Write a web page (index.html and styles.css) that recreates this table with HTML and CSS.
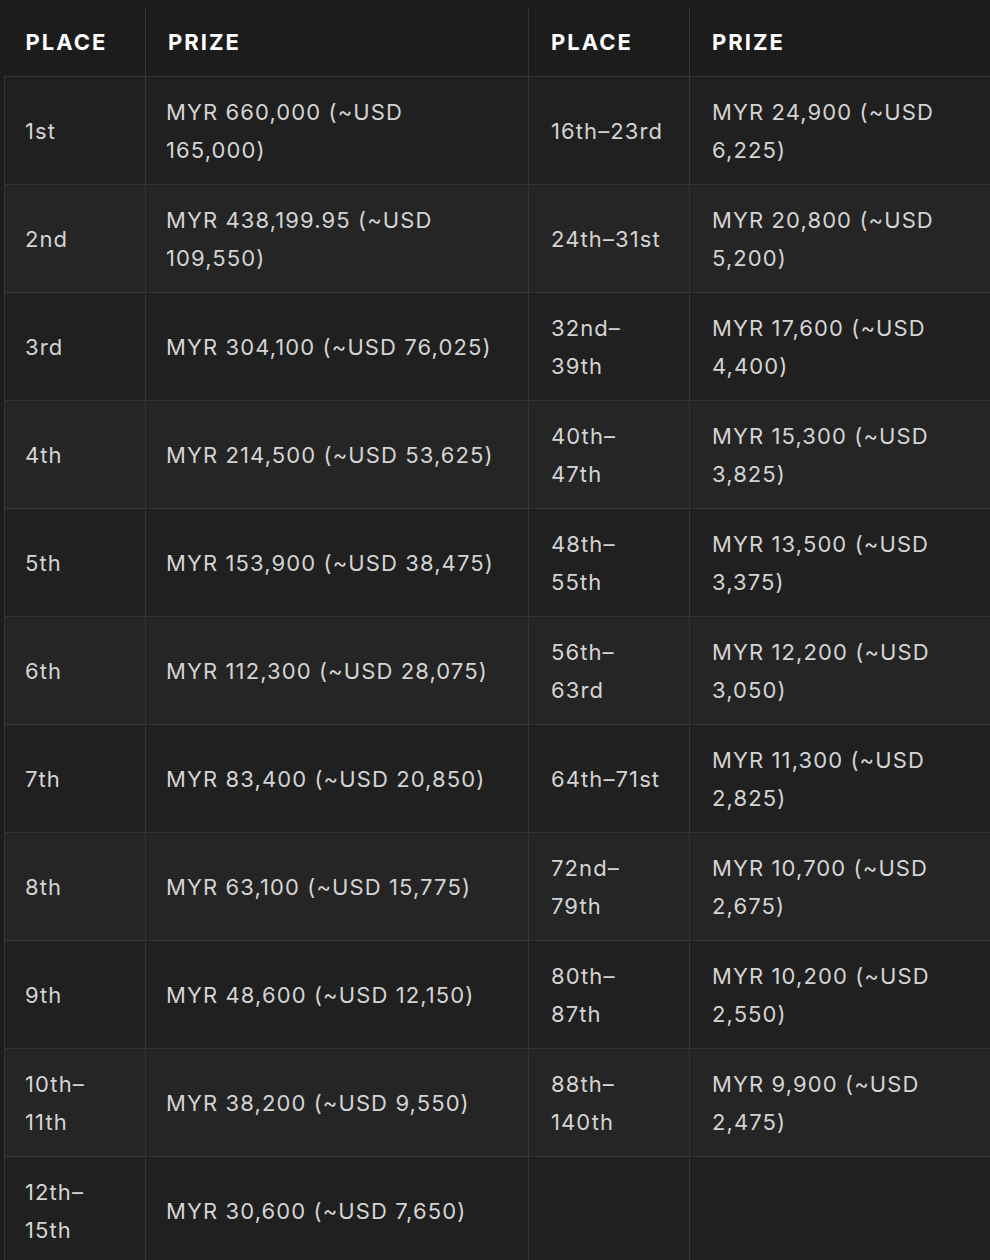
FILE: index.html
```html
<!DOCTYPE html>
<html>
<head>
<meta charset="utf-8">
<link rel="stylesheet" href="styles.css">
</head>
<body>
<table class="prizes">
<colgroup>
<col class="c-place"><col class="c-prize"><col class="c-place2"><col class="c-prize2">
</colgroup>
<thead>
<tr><th>Place</th><th>Prize</th><th>Place</th><th>Prize</th></tr>
</thead>
<tbody>
<tr><td>1st</td><td>MYR 660,000 (~USD 165,000)</td><td>16th–23rd</td><td>MYR 24,900 (~USD 6,225)</td></tr>
<tr><td>2nd</td><td>MYR 438,199.95 (~USD 109,550)</td><td>24th–31st</td><td>MYR 20,800 (~USD 5,200)</td></tr>
<tr><td>3rd</td><td>MYR 304,100 (~USD 76,025)</td><td>32nd–39th</td><td>MYR 17,600 (~USD 4,400)</td></tr>
<tr><td>4th</td><td>MYR 214,500 (~USD 53,625)</td><td>40th–47th</td><td>MYR 15,300 (~USD 3,825)</td></tr>
<tr><td>5th</td><td>MYR 153,900 (~USD 38,475)</td><td>48th–55th</td><td>MYR 13,500 (~USD 3,375)</td></tr>
<tr><td>6th</td><td>MYR 112,300 (~USD 28,075)</td><td>56th–63rd</td><td>MYR 12,200 (~USD 3,050)</td></tr>
<tr><td>7th</td><td>MYR 83,400 (~USD 20,850)</td><td>64th–71st</td><td>MYR 11,300 (~USD 2,825)</td></tr>
<tr><td>8th</td><td>MYR 63,100 (~USD 15,775)</td><td>72nd–79th</td><td>MYR 10,700 (~USD 2,675)</td></tr>
<tr><td>9th</td><td>MYR 48,600 (~USD 12,150)</td><td>80th–87th</td><td>MYR 10,200 (~USD 2,550)</td></tr>
<tr><td>10th–11th</td><td>MYR 38,200 (~USD 9,550)</td><td>88th–140th</td><td>MYR 9,900 (~USD 2,475)</td></tr>
<tr><td>12th–15th</td><td>MYR 30,600 (~USD 7,650)</td><td></td><td></td></tr>
</tbody>
</table>
</body>
</html>
```
FILE: styles.css
```css
html, body {
  margin: 0;
  padding: 0;
  background: #1c1c1c;
  overflow: hidden;
}
body {
  padding: 8px 0 0 4px;
  font-family: Inter, "Noto Sans", sans-serif;
}
.prizes {
  border-collapse: collapse;
  table-layout: fixed;
  width: 1000px;
}
.c-place { width: 141px; }
.c-prize { width: 383px; }
.c-place2 { width: 161px; }
.c-prize2 { width: 315px; }
.prizes th, .prizes td {
  text-align: left;
  vertical-align: middle;
  line-height: 38px;
  font-size: 22px;
}
.prizes th {
  padding: 15px 22px;
  color: #ffffff;
  font-weight: 700;
  text-transform: uppercase;
  letter-spacing: 2px;
  background: #1c1c1c;
  border-left: 1px solid #353535;
  border-bottom: 1px solid #353535;
}
.prizes th:first-child {
  border-left: none;
  padding-left: 21px;
}
.prizes td {
  padding: 16px 22px 15px;
  height: 76px;
  color: #d4d4d4;
  letter-spacing: 1.1px;
  border: 1px solid #353535;
}
.prizes td:nth-child(1) {
  padding-left: 20px;
}
.prizes td:nth-child(2) {
  padding-left: 20px;
  padding-right: 24px;
}
.prizes td:nth-child(3) {
  padding-right: 25px;
}
.prizes tbody tr:nth-child(odd) td { background: #202020; }
.prizes tbody tr:nth-child(even) td { background: #252525; }
```
